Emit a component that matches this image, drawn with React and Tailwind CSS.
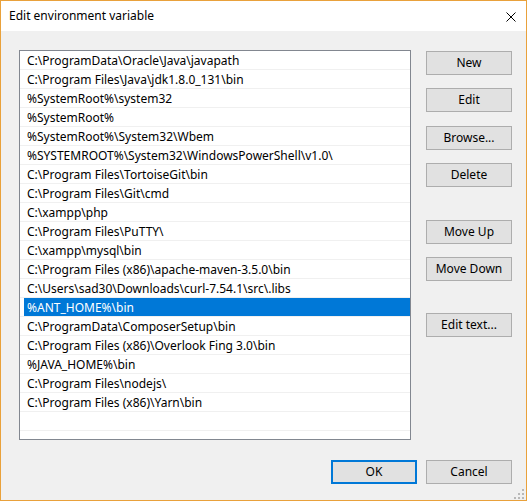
import { useState } from "react"

const paths = [
  "C:\\ProgramData\\Oracle\\Java\\javapath",
  "C:\\Program Files\\Java\\jdk1.8.0_131\\bin",
  "%SystemRoot%\\system32",
  "%SystemRoot%",
  "%SystemRoot%\\System32\\Wbem",
  "%SYSTEMROOT%\\System32\\WindowsPowerShell\\v1.0\\",
  "C:\\Program Files\\TortoiseGit\\bin",
  "C:\\Program Files\\Git\\cmd",
  "C:\\xampp\\php",
  "C:\\Program Files\\PuTTY\\",
  "C:\\xampp\\mysql\\bin",
  "C:\\Program Files (x86)\\apache-maven-3.5.0\\bin",
  "C:\\Users\\sad30\\Downloads\\curl-7.54.1\\src\\.libs",
  "%ANT_HOME%\\bin",
  "C:\\ProgramData\\ComposerSetup\\bin",
  "C:\\Program Files (x86)\\Overlook Fing 3.0\\bin",
  "%JAVA_HOME%\\bin",
  "C:\\Program Files\\nodejs\\",
  "C:\\Program Files (x86)\\Yarn\\bin",
  "",
]

// side buttons with the top margin each one sits at
const sideButtons = [
  { label: "New", mt: "mt-[1px]" },
  { label: "Edit", mt: "mt-[13px]" },
  { label: "Browse...", mt: "mt-[14px]" },
  { label: "Delete", mt: "mt-[13px]" },
  { label: "Move Up", mt: "mt-[33px]" },
  { label: "Move Down", mt: "mt-[13px]" },
  { label: "Edit text...", mt: "mt-[32px]" },
]

function Button({ children, className = "", primary = false }) {
  return (
    <button
      type="button"
      className={
        "w-[86px] h-[24px] bg-[#e1e1e1] text-black text-[12px] leading-none flex items-center justify-center " +
        (primary ? "border-2 border-[#0078d7] " : "border border-[#adadad] ") +
        className
      }
    >
      {children}
    </button>
  )
}

export default function App() {
  const [selected, setSelected] = useState(13)

  return (
    <div
      className="w-[527px] h-[501px] border border-[#e9a13b] flex flex-col bg-white text-black select-none"
      style={{ fontFamily: '"Segoe UI", "Noto Sans", sans-serif' }}
    >
      {/* title bar */}
      <div className="h-[30px] flex items-center justify-between bg-white">
        <span className="pl-[8px] text-[12px]">Edit environment variable</span>
        <svg width="10" height="10" viewBox="0 0 10 10" className="mr-[10px] mt-[2px]">
          <path d="M0.5 0.5 L9.5 9.5 M9.5 0.5 L0.5 9.5" stroke="#000" strokeWidth="1" />
        </svg>
      </div>

      <div className="flex-1 bg-[#f0f0f0] relative pl-[18px] pt-[19px] pr-[14px]">
        <div className="flex gap-[15px]">
          {/* path list */}
          <div className="w-[392px] h-[390px] border border-[#828790] bg-white overflow-hidden">
            {paths.map((p, i) => (
              <div
                key={i}
                onClick={() => p && setSelected(i)}
                className="h-[19px] border-b border-[#f0f0f0] flex"
              >
                <div
                  className={
                    "flex-1 h-[18px] flex items-center pt-[2px] text-[12px] whitespace-nowrap " +
                    (i === selected ? "ml-[4px] pl-[3px] bg-[#0078d7] text-white" : "pl-[7px]")
                  }
                >
                  {p}
                </div>
              </div>
            ))}
          </div>

          <div className="w-[86px] flex flex-col">
            {sideButtons.map((b) => (
              <Button key={b.label} className={b.mt}>
                {b.label}
              </Button>
            ))}
          </div>
        </div>

        <div className="mt-[20px] flex justify-end gap-[9px]">
          <Button primary>OK</Button>
          <Button>Cancel</Button>
        </div>

        {/* resize grip */}
        <svg width="10" height="10" viewBox="0 0 10 10" className="absolute right-[2px] bottom-[1px]">
          <rect x="8" y="0" width="2" height="2" fill="#b8b8b8" />
          <rect x="4" y="4" width="2" height="2" fill="#b8b8b8" />
          <rect x="8" y="4" width="2" height="2" fill="#b8b8b8" />
          <rect x="0" y="8" width="2" height="2" fill="#b8b8b8" />
          <rect x="4" y="8" width="2" height="2" fill="#b8b8b8" />
          <rect x="8" y="8" width="2" height="2" fill="#b8b8b8" />
        </svg>
      </div>
    </div>
  )
}
